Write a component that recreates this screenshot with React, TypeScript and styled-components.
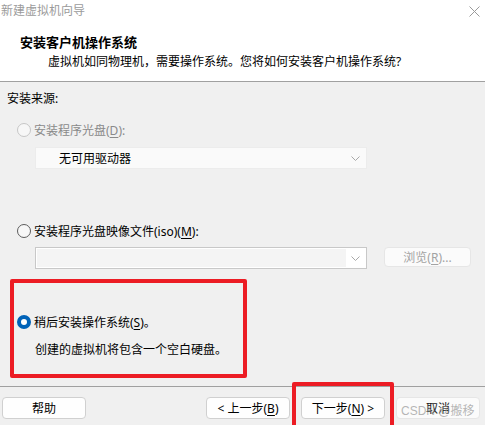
import React from "react";
import styled, { createGlobalStyle, css } from "styled-components";

const Global = createGlobalStyle`
    html, body {
        margin: 0;
        padding: 0;
        background: #f0f0f0;
    }
    body {
        font-family: "Noto Sans", "Noto Sans CJK SC", sans-serif;
        font-size: 12px;
        color: #1a1a1a;
        width: 485px;
        height: 425px;
        overflow: hidden;
    }
`;

const Window = styled.div`
    width: 485px;
    height: 425px;
    display: flex;
    flex-direction: column;
    background: #f0f0f0;
`;

const Header = styled.div`
    height: 81px;
    background: #ffffff;
    border-bottom: 1px solid #a0a0a0;
    display: flex;
    flex-direction: column;
`;

const TitleBar = styled.div`
    height: 22px;
    display: flex;
    align-items: center;
    justify-content: space-between;
    padding: 0 5px 0 1px;
`;

const WindowTitle = styled.span`
    color: #9b9b9b;
    font-size: 12px;
    line-height: 22px;
`;

const Heading = styled.div`
    margin: 12px 0 0 20px;
    font-size: 13px;
    font-weight: bold;
    line-height: 16px;
    color: #000;
`;

const SubHeading = styled.div`
    margin: 3px 0 0 48px;
    line-height: 18px;
    color: #000;
`;

const Body = styled.div`
    display: flex;
    flex-direction: column;
`;

const SectionLabel = styled.div`
    margin: 8px 0 0 7px;
    height: 18px;
    line-height: 18px;
    color: #000;
`;

const RadioRow = styled.label<{ $top: number; $disabled?: boolean }>`
    display: flex;
    align-items: center;
    gap: 3px;
    height: 18px;
    margin: ${({ $top }) => $top}px 0 0 17px;
    color: ${({ $disabled }) => ($disabled ? "#8a8a8a" : "#000")};
`;

const Radio = styled.span<{ $state: "disabled" | "off" | "on" }>`
    width: 14px;
    height: 14px;
    box-sizing: border-box;
    border-radius: 50%;
    display: inline-block;
    ${({ $state }) =>
        $state === "disabled"
            ? css`
                  border: 1px solid #c6c6c6;
                  background: #f7f7f7;
              `
            : $state === "off"
            ? css`
                  border: 1px solid #5c5c5c;
                  background: #f7f7f7;
              `
            : css`
                  border: 4px solid #0063b8;
                  background: #ffffff;
              `}
`;

const Mn = styled.span`
    text-decoration: underline;
    text-underline-offset: 2px;
`;

const Select = styled.div`
    margin: 8px 0 0 35px;
    width: 332px;
    height: 22px;
    box-sizing: border-box;
    background: #fafafa;
    border: 1px solid #ececec;
    display: flex;
    align-items: center;
    justify-content: space-between;
    padding: 0 6px 0 23px;
    color: #000;
`;

const ComboRow = styled.div`
    display: flex;
    align-items: flex-start;
    gap: 17px;
    margin: 7px 0 0 35px;
`;

const Combo = styled.div`
    width: 332px;
    height: 22px;
    box-sizing: border-box;
    border: 1px solid #c8c8c8;
    background: #ffffff;
    display: flex;
    align-items: center;
    padding: 1px 6px 1px 1px;
    gap: 5px;
`;

const ComboField = styled.div`
    flex: 1;
    height: 100%;
    background: #f4f4f4;
`;

const Button = styled.button<{ $disabled?: boolean }>`
    height: 22px;
    width: 84px;
    box-sizing: border-box;
    border-radius: 4px;
    border: 1px solid ${({ $disabled }) => ($disabled ? "#e6e6e6" : "#d0d0d0")};
    background: ${({ $disabled }) => ($disabled ? "#fbfbfb" : "#fefefe")};
    color: ${({ $disabled }) => ($disabled ? "#a3a3a3" : "#000")};
    font-family: inherit;
    font-size: 12px;
    padding: 0;
    display: flex;
    align-items: center;
    justify-content: center;
    position: relative;
`;

const BrowseButton = styled(Button)`
    width: 87px;
    height: 20px;
`;

const Highlight = styled.div`
    margin: 10px 0 0 10px;
    width: 237px;
    height: 99px;
    box-sizing: border-box;
    border: 4px solid #ec1c24;
    border-radius: 2px;
    display: flex;
    flex-direction: column;
`;

const HighlightRadio = styled(RadioRow)`
    margin-left: 3px;
`;

const Note = styled.div`
    margin: 10px 0 0 21px;
    height: 18px;
    line-height: 18px;
    color: #000;
`;

const Footer = styled.div`
    margin-top: 8px;
    border-top: 1px solid #a0a0a0;
    display: flex;
    justify-content: space-between;
    padding: 10px 5px 0 2px;
`;

const ButtonGroup = styled.div`
    display: flex;
    gap: 11px;
`;

const Marked = styled.div`
    position: relative;
    &::after {
        content: "";
        position: absolute;
        left: -9px;
        right: -9px;
        top: -15px;
        bottom: -12px;
        border: 4px solid #ec1c24;
        border-radius: 2px;
        pointer-events: none;
    }
`;

const CancelLabel = styled.span`
    color: #1a1a1a;
`;

const Watermark = styled.span`
    position: absolute;
    left: 4px;
    top: 3px;
    font-family: "Liberation Sans", "Noto Sans CJK SC", sans-serif;
    font-size: 12px;
    color: rgba(150, 150, 150, 0.7);
    white-space: nowrap;
    pointer-events: none;
`;

const Chevron = () => (
    <svg width="9" height="5" viewBox="0 0 9 5">
        <polyline points="0.5,0.5 4.5,4.5 8.5,0.5" fill="none" stroke="#a8a8a8" strokeWidth="1" />
    </svg>
);

const CloseIcon = () => (
    <svg width="11" height="11" viewBox="0 0 11 11">
        <path d="M0.5 0.5 L10.5 10.5 M10.5 0.5 L0.5 10.5" stroke="#9a9a9a" strokeWidth="1" />
    </svg>
);

export default function App() {
    return (
        <Window>
            <Global />
            <Header>
                <TitleBar>
                    <WindowTitle>新建虚拟机向导</WindowTitle>
                    <CloseIcon />
                </TitleBar>
                <Heading>安装客户机操作系统</Heading>
                <SubHeading>虚拟机如同物理机，需要操作系统。您将如何安装客户机操作系统?</SubHeading>
            </Header>
            <Body>
                <SectionLabel>安装来源:</SectionLabel>
                <RadioRow $top={13} $disabled>
                    <Radio $state="disabled" />
                    <span>
                        安装程序光盘(<Mn>D</Mn>):
                    </span>
                </RadioRow>
                <Select>
                    <span>无可用驱动器</span>
                    <Chevron />
                </Select>
                <RadioRow $top={53}>
                    <Radio $state="off" />
                    <span>
                        安装程序光盘映像文件(iso)(<Mn>M</Mn>):
                    </span>
                </RadioRow>
                <ComboRow>
                    <Combo>
                        <ComboField />
                        <Chevron />
                    </Combo>
                    <BrowseButton $disabled>
                        <span>
                            浏览(<Mn>R</Mn>)...
                        </span>
                    </BrowseButton>
                </ComboRow>
                <Highlight>
                    <HighlightRadio $top={30}>
                        <Radio $state="on" />
                        <span>
                            稍后安装操作系统(<Mn>S</Mn>)。
                        </span>
                    </HighlightRadio>
                    <Note>创建的虚拟机将包含一个空白硬盘。</Note>
                </Highlight>
            </Body>
            <Footer>
                <Button>帮助</Button>
                <ButtonGroup>
                    <Button>
                        <span>
                            &lt; 上一步(<Mn>B</Mn>)
                        </span>
                    </Button>
                    <Marked>
                        <Button>
                            <span>
                                下一步(<Mn>N</Mn>) &gt;
                            </span>
                        </Button>
                    </Marked>
                    <Button $disabled>
                        <CancelLabel>取消</CancelLabel>
                        <Watermark>CSDN @搬移</Watermark>
                    </Button>
                </ButtonGroup>
            </Footer>
        </Window>
    );
}
